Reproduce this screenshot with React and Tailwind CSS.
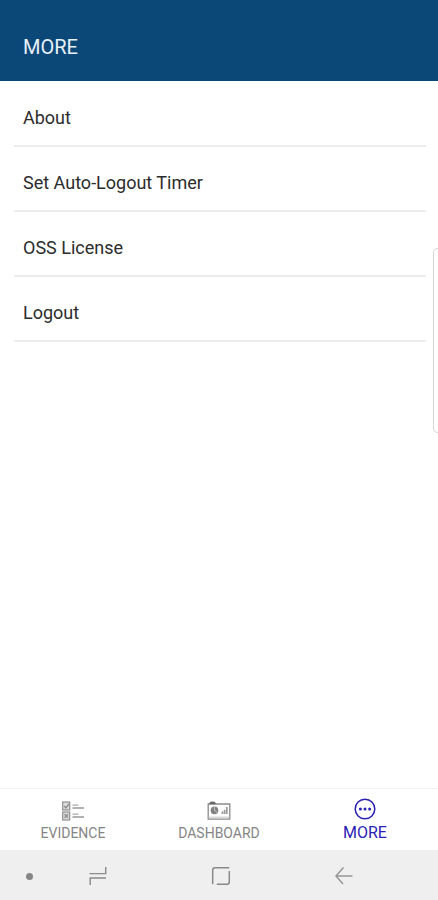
const rows = ["About", "Set Auto-Logout Timer", "OSS License", "Logout"];

function EvidenceIcon() {
  return (
    <svg width="24" height="20" viewBox="0 0 24 20" fill="none" stroke="#8f8f8f" aria-hidden="true">
      <rect x="1.7" y="1" width="7" height="8" strokeWidth="1.2" fill="#dcdcdc" />
      <rect x="1.7" y="11" width="7" height="8" strokeWidth="1.2" fill="#dcdcdc" />
      <path d="M3.2 5l1.7 2 3-4M3.5 13.2l3.5 3.6M7 13.2l-3.5 3.6" strokeWidth="1.4" />
      <path d="M11.5 4.2h6M11.5 13.2h6" stroke="#a8a8a8" strokeWidth="1.3" />
      <path d="M11.5 7h11.5M11.5 16h11.5" stroke="#999" strokeWidth="1.4" />
    </svg>
  );
}

function DashboardIcon() {
  return (
    <svg width="24" height="20" viewBox="0 0 24 20" fill="none" stroke="#8a8a8a" aria-hidden="true">
      <path d="M1.2 3h21.6v15.2H1.2z" strokeWidth="1.3" />
      <path d="M2.5 2.7l1-1.6h4l1 1.6z" fill="#666" stroke="#666" />
      <path d="M1.5 16.2h21" stroke="#c4c4c4" />
      <circle cx="7.5" cy="9.4" r="3.8" fill="#808080" stroke="none" />
      <path d="M7.5 9.4V5.6M7.5 9.4l3.2 2.6" stroke="#ddd" strokeWidth="0.8" />
      <path d="M15.4 13v-2.4M17.6 13V8.8M19.8 13V6" stroke="#999" strokeWidth="1.7" />
    </svg>
  );
}

function MoreIcon() {
  return (
    <svg width="24" height="24" viewBox="0 0 24 24" fill="none" aria-hidden="true">
      <circle cx="12" cy="12" r="9.8" stroke="#2a22b4" strokeWidth="1.5" />
      <g fill="#2a22b4">
        <circle cx="7.4" cy="12" r="1.5" />
        <circle cx="12" cy="12" r="1.5" />
        <circle cx="16.6" cy="12" r="1.5" />
      </g>
    </svg>
  );
}

const tabs = [
  { label: "EVIDENCE", Icon: EvidenceIcon, style: "text-sm text-[#858585]" },
  { label: "DASHBOARD", Icon: DashboardIcon, style: "text-sm text-[#858585]" },
  { label: "MORE", Icon: MoreIcon, style: "text-base text-[#2a22b4]", current: true },
];

export default function App() {
  return (
    <div className="relative flex min-h-screen flex-col bg-white font-[Roboto,sans-serif]">
      <header className="bg-[#0b4878] px-[23px] pt-[35px] pb-[22px]">
        <h1 className="text-xl leading-6 text-[#e8f0f8]">MORE</h1>
      </header>

      <main className="flex-1 pt-px pr-3 pl-3.5">
        <ul>
          {rows.map((row) => (
            <li key={row} className="border-b-2 border-[#ececec]">
              <button type="button" className="w-full px-[9px] pt-6 pb-[15px] text-left text-lg leading-6 text-[#2c2c2c]">
                {row}
              </button>
            </li>
          ))}
        </ul>
      </main>

      <div className="absolute top-[248px] right-0 h-[185px] w-[5px] rounded-l-[5px] border border-r-0 border-[#d4d4d4] bg-white" />

      <nav className="grid grid-cols-3 border-t border-[#f0f0f0]" aria-label="Sections">
        {tabs.map(({ label, Icon, style, current }) => (
          <button
            key={label}
            type="button"
            aria-current={current ? "page" : undefined}
            className={`flex flex-col items-center gap-0.5 pt-2 pb-[7px] ${style}`}
          >
            <span className="flex h-6 items-end">
              <Icon />
            </span>
            <span className="leading-5">{label}</span>
          </button>
        ))}
      </nav>

      <footer className="grid h-[50px] grid-cols-[37px_1fr_1fr_1fr_33px] items-center bg-[#efefef] pt-0.5">
        <span className="mr-1 size-[7px] justify-self-end rounded-full bg-[#858585]" />
        <button type="button" aria-label="Recent apps" className="flex justify-center">
          <svg width="20" height="20" viewBox="0 0 20 20" fill="none" stroke="#8a8a8a" strokeWidth="1.4">
            <path d="M1.5 7.6h16.2V1M18 12H2.2v7" />
          </svg>
        </button>
        <button type="button" aria-label="Home" className="flex justify-center">
          <svg width="20" height="20" viewBox="0 0 20 20" fill="none" stroke="#8a8a8a" strokeWidth="1.5">
            <path d="M1.7 18.2V4q0-2.3 2.3-2.3h14.3M18.3 5v11q0 2.2-2.2 2.2H5.8" />
          </svg>
        </button>
        <button type="button" aria-label="Back" className="flex justify-center">
          <svg width="20" height="20" viewBox="0 0 20 20" fill="none" stroke="#979797" strokeWidth="1.5">
            <path d="M9.5 1.5L2 10l7 8M2 10h16.5" />
          </svg>
        </button>
      </footer>
    </div>
  );
}
